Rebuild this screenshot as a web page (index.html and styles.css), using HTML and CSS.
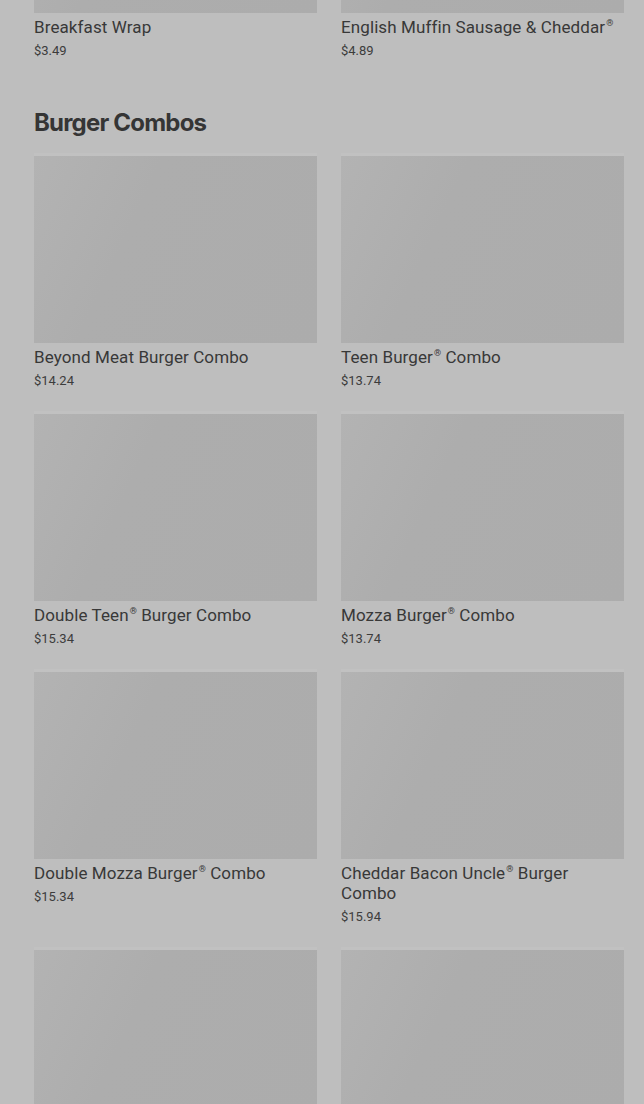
FILE: index.html
```html
<!DOCTYPE html>
<html lang="en">
<head>
  <meta charset="UTF-8">
  <title>Menu</title>
  <link rel="stylesheet" href="styles.css">
</head>
<body>
  <main class="menu">
    <section class="category category-prev">
      <div class="grid">
        <div class="card">
          <div class="thumb"></div>
          <p class="name">Breakfast Wrap</p>
          <p class="price">$3.49</p>
        </div>
        <div class="card">
          <div class="thumb"></div>
          <p class="name">English Muffin Sausage &amp; Cheddar<sup>®</sup></p>
          <p class="price">$4.89</p>
        </div>
      </div>
    </section>

    <section class="category">
      <h2>Burger Combos</h2>
      <div class="grid">
        <div class="card">
          <div class="thumb"></div>
          <p class="name">Beyond Meat Burger Combo</p>
          <p class="price">$14.24</p>
        </div>
        <div class="card">
          <div class="thumb"></div>
          <p class="name">Teen Burger<sup>®</sup> Combo</p>
          <p class="price">$13.74</p>
        </div>
        <div class="card">
          <div class="thumb"></div>
          <p class="name">Double Teen<sup>®</sup> Burger Combo</p>
          <p class="price">$15.34</p>
        </div>
        <div class="card">
          <div class="thumb"></div>
          <p class="name">Mozza Burger<sup>®</sup> Combo</p>
          <p class="price">$13.74</p>
        </div>
        <div class="card">
          <div class="thumb"></div>
          <p class="name">Double Mozza Burger<sup>®</sup> Combo</p>
          <p class="price">$15.34</p>
        </div>
        <div class="card">
          <div class="thumb"></div>
          <p class="name">Cheddar Bacon Uncle<sup>®</sup> Burger Combo</p>
          <p class="price">$15.94</p>
        </div>
        <div class="card">
          <div class="thumb"></div>
        </div>
        <div class="card">
          <div class="thumb"></div>
        </div>
      </div>
    </section>
  </main>
</body>
</html>
```

FILE: styles.css
```css
body {
  margin: 0;
  background: #bebebe;
  font-family: Roboto, "Liberation Sans", sans-serif;
  color: #3a3a3a;
  overflow: hidden;
}
.menu {
  padding: 0 20px 0 34px;
  margin-top: -174px;
}
.category {
  margin-bottom: 46px;
}
.category h2 {
  margin: 0 0 17px;
  font-family: Inter, Roboto, sans-serif;
  font-size: 24px;
  line-height: 32px;
  font-weight: 700;
  letter-spacing: -0.8px;
  color: #353535;
}
.grid {
  display: grid;
  grid-template-columns: 1fr 1fr;
  column-gap: 24px;
  row-gap: 23px;
}
.thumb {
  height: 187px;
  background: linear-gradient(115deg, #b3b3b3 0%, #adadad 35%, #acacac 100%);
  box-shadow: 0 -3px 0 #c1c1c1;
}
.name {
  margin: 4px 0 0;
  font-size: 17px;
  line-height: 20px;
  letter-spacing: 0.1px;
  color: #383838;
}
.name sup {
  font-size: 9px;
  line-height: 1;
  vertical-align: super;
  margin-left: 1px;
}
.price {
  margin: 4px 0 0;
  font-size: 13px;
  line-height: 20px;
  color: #3c3c3c;
}
```
